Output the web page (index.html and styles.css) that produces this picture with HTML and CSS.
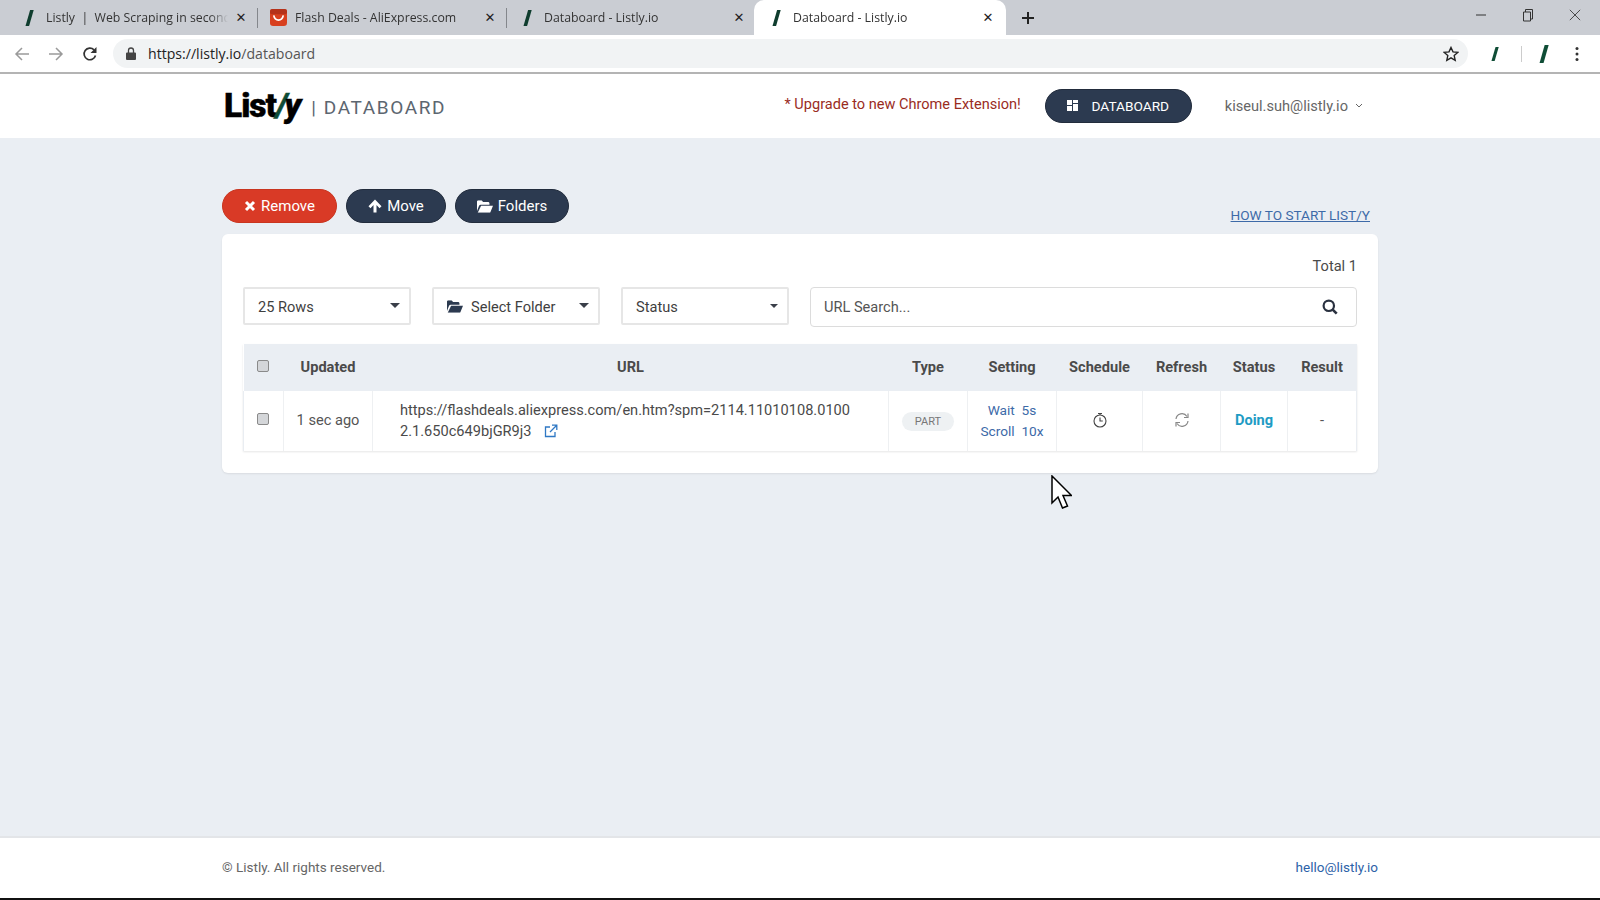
FILE: index.html
```html
<!DOCTYPE html>
<html lang="en">
<head>
<meta charset="utf-8">
<title>Databoard - Listly.io</title>
<link rel="stylesheet" href="styles.css">
</head>
<body>
<svg class="defs" width="0" height="0" aria-hidden="true">
  <symbol id="slash" viewBox="0 0 10 18"><path d="M5.6 1h3.6L4.6 17H1z"/></symbol>
  <symbol id="folder" viewBox="0 0 18 14"><path d="M0 12V1.6C0 .7.7 0 1.6 0h3.6l1.6 1.8h5.6c.9 0 1.6.7 1.6 1.6V5H4.2C3.3 5 2.600 5.500 2.200 6.300z"/><path d="M4.600 6.200H18l-3.200 7.800H.8z"/></symbol>
</svg>
<div class="tabstrip">
  <div class="tab sep"><svg class="fav"><use href="#slash"/></svg><span class="tab-title">Listly&nbsp; |&nbsp; Web Scraping in seconds</span><span class="tab-x">✕</span></div>
  <div class="tab sep"><svg class="ali" viewBox="0 0 16 16"><rect width="16" height="16" rx="3" fill="#d8401f"/><rect y="0" width="16" height="5" rx="2" fill="#b5321a"/><path d="M3.500 6c.6 3 2.300 4.500 4.500 4.500S11.900 9 12.500 6" fill="none" stroke="#fff" stroke-width="1.600"/></svg><span class="tab-title">Flash Deals - AliExpress.com</span><span class="tab-x">✕</span></div>
  <div class="tab"><svg class="fav"><use href="#slash"/></svg><span class="tab-title">Databoard - Listly.io</span><span class="tab-x">✕</span></div>
  <div class="tab active"><svg class="fav"><use href="#slash"/></svg><span class="tab-title">Databoard - Listly.io</span><span class="tab-x">✕</span></div>
  <svg class="newtab" viewBox="0 0 14 14"><path d="M7 1v12M1 7h12" stroke="#222" stroke-width="2" fill="none"/></svg>
  <div class="winctl">
    <svg viewBox="0 0 12 12"><path d="M1 6h10" stroke="#333" fill="none"/></svg>
    <svg viewBox="0 0 12 14"><path d="M1.500 4h7v9h-7zM3.500 4V1.500h7V11H8.500" stroke="#333" fill="none"/></svg>
    <svg viewBox="0 0 14 14"><path d="M1 1l12 12M13 1L1 13" stroke="#333" fill="none"/></svg>
  </div>
</div>
<div class="toolbar">
  <svg class="nav-ic" viewBox="0 0 16 16"><path d="M15 8H2M8 2L2 8l6 6" stroke="#9a9a9a" stroke-width="1.500" fill="none"/></svg>
  <svg class="nav-ic" viewBox="0 0 16 16"><path d="M1 8h13M8 2l6 6-6 6" stroke="#9a9a9a" stroke-width="1.500" fill="none"/></svg>
  <svg class="nav-ic" viewBox="0 0 16 16"><path d="M13.500 9.500A5.800 5.800 0 1 1 12 3.800" stroke="#333" stroke-width="1.700" fill="none"/><path d="M14.500 1v6h-6z" fill="#333"/></svg>
  <div class="omnibox">
    <svg class="lock" viewBox="0 0 10 13"><path d="M1 5.500h8a1 1 0 0 1 1 1V12a1 1 0 0 1-1 1H1a1 1 0 0 1-1-1V6.500a1 1 0 0 1 1-1z" fill="#444"/><path d="M2.500 6V3.500a2.500 2.500 0 0 1 5 0V6" stroke="#444" stroke-width="1.300" fill="none"/></svg>
    <span class="url-text">https://listly.io<span class="url-path">/databoard</span></span>
    <svg class="star" viewBox="0 0 16 16"><path d="M8 1.500l2 4.400 4.800.5-3.600 3.200 1 4.700L8 11.900l-4.200 2.400 1-4.700L1.200 6.400 6 5.900z" stroke="#222" stroke-width="1.400" fill="none"/></svg>
  </div>
  <div class="ext">
    <svg class="ext-a"><use href="#slash"/></svg>
    <span class="ext-div"></span>
    <svg class="ext-b"><use href="#slash"/></svg>
    <svg class="dots" viewBox="0 0 4 16"><circle cx="2" cy="2.500" r="1.500"/><circle cx="2" cy="8" r="1.500"/><circle cx="2" cy="13.500" r="1.500"/></svg>
  </div>
</div>
<header class="site-header">
  <div class="logo">List<span class="logo-slash">/</span><span class="logo-y">y</span></div>
  <div class="brand-sub">| DATABOARD</div>
  <div class="header-right">
    <a class="upgrade">* Upgrade to new Chrome Extension!</a>
    <a class="btn btn-dark btn-databoard">
      <svg class="grid-ic" viewBox="0 0 11 11"><path d="M0 0h5v5H0zM6 0h5v3H6zM6 4h5v7H6zM0 6h5v5H0z" fill="#fff"/></svg>DATABOARD</a>
    <span class="user">kiseul.suh@listly.io<svg class="chev" viewBox="0 0 8 5"><path d="M1 1l3 3 3-3" stroke="#666" fill="none"/></svg></span>
  </div>
</header>
<main class="main">
  <div class="actions">
    <a class="btn btn-red"><svg class="b-ic" viewBox="0 0 12 12"><path d="M2 2l8 8M10 2l-8 8" stroke="#fff" stroke-width="3" fill="none"/></svg>Remove</a>
    <a class="btn btn-dark"><svg class="b-ic arrow" viewBox="0 0 14 14"><path d="M7 .5L.5 7.200l2 2 3-3.100V13.500h3V6.100l3 3.100 2-2z" fill="#fff"/></svg>Move</a>
    <a class="btn btn-dark"><svg class="b-ic wide" viewBox="0 0 18 14" fill="#fff"><use href="#folder"/></svg>Folders</a>
    <a class="howto">HOW TO START LIST/Y</a>
  </div>
  <section class="card">
    <div class="total">Total 1</div>
    <div class="filters">
      <div class="select"><span>25 Rows</span><i class="caret"></i></div>
      <div class="select"><span class="sel-label"><svg class="sel-ic" viewBox="0 0 18 14" fill="#2c3a50"><use href="#folder"/></svg>Select Folder</span><i class="caret"></i></div>
      <div class="select"><span>Status</span><i class="caret small"></i></div>
      <div class="search"><span class="placeholder">URL Search...</span>
        <svg class="search-ic" viewBox="0 0 16 16"><circle cx="6.800" cy="6.800" r="5.200" stroke="#2a3140" stroke-width="2.200" fill="none"/><path d="M10.700 10.700l4 4" stroke="#2a3140" stroke-width="2.600" fill="none"/></svg>
      </div>
    </div>
    <table class="data">
      <colgroup><col class="c1"><col class="c2"><col class="c3"><col class="c4"><col class="c5"><col class="c6"><col class="c7"><col class="c8"><col class="c9"></colgroup>
      <thead>
        <tr><th><input type="checkbox" class="chk"></th><th>Updated</th><th>URL</th><th>Type</th><th>Setting</th><th>Schedule</th><th>Refresh</th><th>Status</th><th>Result</th></tr>
      </thead>
      <tbody>
        <tr>
          <td><input type="checkbox" class="chk"></td>
          <td class="muted">1 sec ago</td>
          <td class="url">https://flashdeals.aliexpress.com/en.htm?spm=2114.11010108.0100<br>2.1.650c649bjGR9j3 <svg class="ext-link" viewBox="0 0 14 14"><path d="M11 8v4.500H1.500V3H6M8 1.200h4.800V6M12.500 1.500L6 8" stroke="#2f78c4" stroke-width="1.300" fill="none"/></svg></td>
          <td><span class="pill">PART</span></td>
          <td class="setting"><span>Wait&nbsp; 5s</span><br><span>Scroll&nbsp; 10x</span></td>
          <td><svg class="tbl-ic" viewBox="0 0 16 16"><circle cx="8" cy="9" r="6" stroke="#444" stroke-width="1.100" fill="none"/><path d="M6 1.500h4M8 1.500V3M8 5.500V9h2.800" stroke="#444" stroke-width="1.100" fill="none"/></svg></td>
          <td><svg class="tbl-ic" viewBox="0 0 16 16"><path d="M2 7a6 6 0 0 1 11-2.500M14 9a6 6 0 0 1-11 2.500" stroke="#888" stroke-width="1.200" fill="none"/><path d="M14 1.500v4h-4M2 14.500v-4h4" stroke="#888" stroke-width="1.200" fill="none"/></svg></td>
          <td class="doing">Doing</td>
          <td class="muted">-</td>
        </tr>
      </tbody>
    </table>
  </section>
</main>
<footer class="site-footer">
  <span>© Listly. All rights reserved.</span>
  <a class="mail">hello@listly.io</a>
</footer>
<svg class="cursor" viewBox="0 0 21 36"><path d="M1 1v27l6-6 4.500 11 5-2L12 20.500h8.500z" fill="#fff" stroke="#000" stroke-width="1.500"/></svg>
</body>
</html>
```
FILE: styles.css
```css
* { box-sizing: border-box; }
html, body { margin: 0; height: 900px; }
body {
  display: flex;
  flex-direction: column;
  overflow: hidden;
  position: relative;
  font-family: Roboto, "Liberation Sans", sans-serif;
  color: #4a4a4a;
  background: #eaeef3;
}
.defs { position: absolute; }

/* browser chrome */
.tabstrip {
  height: 35px;
  flex: none;
  display: flex;
  align-items: center;
  padding-left: 9px;
  background: #cacdd3;
  font-family: "Open Sans", "Noto Sans", sans-serif;
  font-size: 12.300px;
  color: #333;
}
.tab {
  width: 249px;
  height: 35px;
  display: flex;
  align-items: center;
  padding: 0 10px 0 15px;
  position: relative;
}
.tab.sep::after {
  content: "";
  position: absolute;
  right: 0;
  top: 8px;
  bottom: 7px;
  width: 1px;
  background: #84878c;
}
.tab.active {
  width: 252px;
  margin-left: -2px;
  background: #fff;
  border-radius: 10px 10px 0 0;
  padding: 0 11px 0 17px;
}
.fav { width: 11px; height: 18px; fill: #0f3d2e; flex: none; margin-right: 11px; }
.ali { width: 17px; height: 17px; flex: none; margin: 0 8px 0 -3px; }
.tab-title {
  flex: 1;
  white-space: nowrap;
  overflow: hidden;
  -webkit-mask-image: linear-gradient(to right, #000 90%, transparent);
  mask-image: linear-gradient(to right, #000 90%, transparent);
}
.tab-x { width: 14px; margin-left: 6px; font-size: 13px; color: #222; text-align: center; flex: none; font-family: "DejaVu Sans", sans-serif; }
.newtab { width: 14px; height: 14px; margin-left: 15px; flex: none; }
.winctl { margin-left: auto; display: flex; align-items: center; gap: 35px; padding: 0 19px 6px 0; }
.winctl svg { width: 12px; height: 14px; }

.toolbar {
  height: 39px;
  flex: none;
  display: flex;
  align-items: center;
  background: #fff;
  border-bottom: 2px solid #b4b4b4;
  padding: 0 0 0 14px;
}
.nav-ic { width: 16px; height: 16px; margin-right: 18px; flex: none; }
.nav-ic:nth-of-type(3) { margin-right: 15px; }
.omnibox {
  width: 1355px;
  height: 29px;
  flex: none;
  display: flex;
  align-items: center;
  border-radius: 15px;
  background: #f1f3f4;
  padding: 0 9px 0 13px;
  font-family: "Open Sans", "Noto Sans", sans-serif;
  font-size: 14.100px;
  color: #222;
}
.lock { width: 10px; height: 13px; margin-right: 12px; }
.url-path { color: #555; }
.star { width: 16px; height: 16px; margin-left: auto; }
.ext { display: flex; align-items: center; padding-left: 22px; }
.ext-a { width: 10px; height: 16px; fill: #0f4d36; }
.ext-div { width: 1px; height: 16px; background: #ccc; margin: 0 16px 0 21px; }
.ext-b { width: 12px; height: 20px; fill: #0f4d36; }
.dots { width: 4px; height: 16px; fill: #333; margin-left: 25px; }

/* site header */
.site-header {
  height: 64px;
  flex: none;
  display: flex;
  align-items: center;
  background: #fff;
  padding: 0 237px 0 224px;
}
.logo {
  font-family: Roboto, sans-serif;
  font-weight: 900;
  font-size: 33.500px;
  color: #000;
  letter-spacing: -1px;
  line-height: 1;
  -webkit-text-stroke: .4px #000;
}
.logo-slash { color: #0f4d36; -webkit-text-stroke: .4px #0f4d36; font-style: italic; margin: 0 -2px 0 0; }
.logo-y { font-style: italic; }
.brand-sub { margin-left: 11px; font-size: 19px; letter-spacing: 1.600px; color: #5c6670; padding-top: 3px; }
.header-right { margin-left: auto; display: flex; align-items: center; }
.upgrade { color: #9a2c1e; font-size: 14.550px; margin-right: 24px; padding-bottom: 3px; }
.user { margin-left: 33px; font-size: 14.600px; color: #666; display: flex; align-items: center; padding-bottom: 1px; }
.chev { width: 8px; height: 5px; margin-left: 7px; }

.btn {
  display: inline-flex;
  align-items: center;
  justify-content: center;
  height: 34px;
  border-radius: 17px;
  color: #fff;
  font-size: 15px;
  flex: none;
}
.btn-dark { background: #2c3a50; border: 1px solid #222c3c; }
.btn-red { background: #d93a26; border: 1px solid #c9351f; width: 115px; }
.btn-databoard { width: 147px; font-size: 13.700px; padding-bottom: 1px; }
.grid-ic { width: 11px; height: 11px; margin-right: 13px; }

/* main */
.main { flex: 1; padding: 51px 222px 0; }
.actions { display: flex; height: 34px; margin-bottom: 11px; gap: 9px; }
.actions .btn-dark:nth-child(2) { width: 100px; }
.actions .btn-dark:nth-child(3) { width: 114px; }
.b-ic { width: 12px; height: 12px; margin-right: 5px; }
.b-ic.arrow { width: 14px; height: 14px; margin-right: 5px; }
.b-ic.wide { width: 16px; height: 13px; }
.howto { margin-left: auto; margin-right: 8px; align-self: flex-end; font-size: 13.600px; color: #3d6aa8; text-decoration: underline; line-height: 16px; }

.card {
  background: #fff;
  border-radius: 6px;
  box-shadow: 0 1px 2px rgba(0,0,0,.08);
  padding: 22px 21px 22px;
}
.total { text-align: right; font-size: 14.600px; line-height: 20px; }
.filters { display: flex; align-items: flex-start; gap: 21px; margin: 11px 0 17px; }
.select {
  width: 168px;
  height: 38px;
  flex: none;
  display: flex;
  align-items: center;
  justify-content: space-between;
  border: 2px solid #e6e6e6;
  border-radius: 2px;
  padding: 1px 9px 0 13px;
  font-size: 14.600px;
  color: #3f3f3f;
}
.sel-label { display: flex; align-items: center; }
.sel-ic { width: 16px; height: 13px; margin-right: 8px; }
.caret { width: 0; height: 0; border: 5px solid transparent; border-top-color: #3a3f49; border-bottom: 0; margin-bottom: 2px; }
.caret.small { border-width: 4px; border-bottom: 0; }
.search {
  flex: 1;
  height: 40px;
  display: flex;
  align-items: center;
  justify-content: space-between;
  border: 1px solid #dcdcdc;
  border-radius: 4px;
  padding: 0 18px 0 13px;
  font-size: 14.600px;
  color: #555;
}
.search-ic { width: 16px; height: 16px; }

table.data { width: 1113px; table-layout: fixed; border-collapse: collapse; font-size: 14.600px; box-shadow: 0 1px 2px rgba(0,0,0,.1); }
.c1 { width: 40px; } .c2 { width: 89px; } .c3 { width: 516px; } .c4 { width: 79px; } .c5 { width: 89px; }
.c6 { width: 86px; } .c7 { width: 78px; } .c8 { width: 67px; } .c9 { width: 69px; }
.data th { height: 47px; background: #eaeef3; font-weight: 700; color: #4a4a4a; padding: 0 0 1px; text-align: center; }
.data td { height: 60px; padding: 0; text-align: center; border-left: 1px solid #eef0f2; line-height: 21.500px; }
.data tr td:first-child { border-left: 1px solid #e9edf2; }
.data tr td:last-child { border-right: 1px solid #e9edf2; }
.data td.url { text-align: left; padding-left: 27px; color: #4a4a4a; white-space: nowrap; }
.chk {
  appearance: none;
  -webkit-appearance: none;
  width: 12px;
  height: 12px;
  margin: 0 1px 4px 0;
  vertical-align: middle;
  background: #d4d6d9;
  border: 1px solid #8a8a8a;
  border-radius: 2px;
}
.muted { color: #555; }
.ext-link { width: 14px; height: 14px; margin-left: 9px; vertical-align: -2px; }
.pill {
  display: inline-block;
  width: 52px;
  height: 19px;
  line-height: 19px;
  border-radius: 10px;
  background: #eef1f3;
  color: #777;
  font-size: 11px;
}
.setting { color: #3d6aa8; font-size: 13.700px; }
.tbl-ic { width: 16px; height: 16px; vertical-align: middle; margin-bottom: 2px; }
.doing { color: #1e9bc4; font-weight: 700; }

/* footer */
.site-footer {
  height: 64px;
  flex: none;
  display: flex;
  align-items: center;
  justify-content: space-between;
  background: #fff;
  border-top: 2px solid #e3e5e8;
  border-bottom: 2px solid #111;
  padding: 0 222px 2px;
  font-size: 13.500px;
  color: #666;
}
.mail { color: #2d62a8; }

.cursor { position: absolute; left: 1051px; top: 475px; width: 21px; height: 36px; }
```
